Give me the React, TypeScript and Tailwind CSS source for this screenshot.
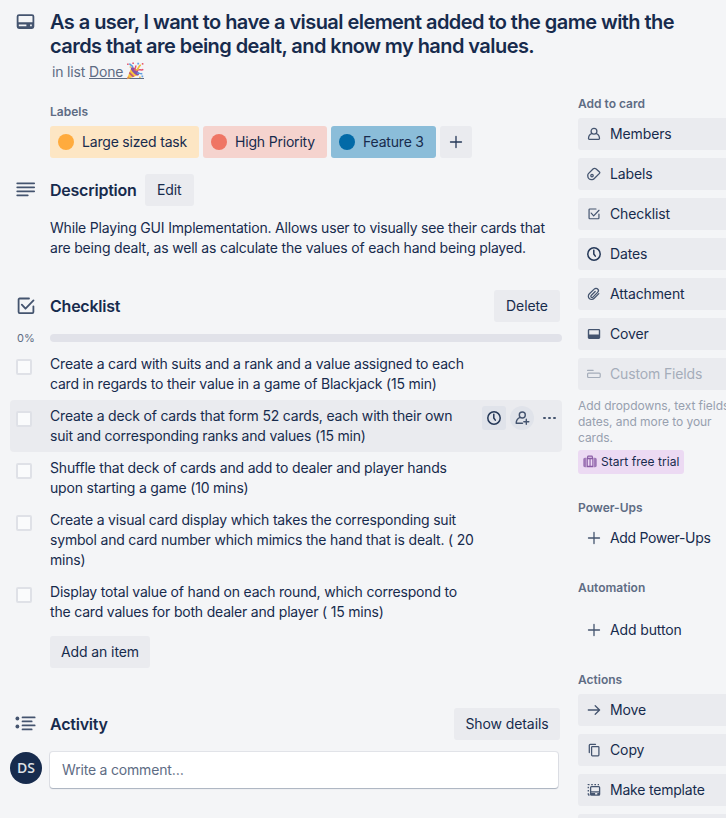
import type { ReactNode } from "react";

type IconProps = { className?: string };

const stroke = {
  fill: "none",
  stroke: "currentColor",
  strokeLinecap: "round" as const,
  strokeLinejoin: "round" as const,
};

function CardIcon() {
  return (
    <svg width="20" height="16" viewBox="0 0 20 16" className="block">
      <path
        fill="currentColor"
        fillRule="evenodd"
        d="M3 .3h13a2.300 2.300 0 0 1 2.300 2.300v10A2.300 2.300 0 0 1 16 14.900H3A2.300 2.300 0 0 1 .7 12.600v-10A2.300 2.300 0 0 1 3 .3ZM3 2a.5.5 0 0 0-.5.5v5.800h14V2.500A.5.5 0 0 0 16 2H3Zm-.2 8.600v1.700h7.600v-1.700H2.800Zm11.300 0v1.700h1.700v-1.700h-1.700Z"
      />
    </svg>
  );
}

function LinesIcon() {
  return (
    <svg width="20" height="16" viewBox="0 0 20 16" className="block" {...stroke} strokeWidth="1.700">
      <path d="M1.200 1.300h17M1.200 5.300h17M1.200 9.300h17M1.200 13.300h10.600" />
    </svg>
  );
}

function CheckIcon({ className }: IconProps) {
  return (
    <svg viewBox="0 0 18 18" className={className} {...stroke} strokeWidth="1.800">
      <path d="M12 1.500H2.600a1 1 0 0 0-1 1v12.600a1 1 0 0 0 1 1h12.800a1 1 0 0 0 1-1V9.300" />
      <path d="M4.800 7.600l3.700 4.100 8-8.300" />
    </svg>
  );
}

function ActivityIcon() {
  return (
    <svg width="22" height="16" viewBox="0 0 22 16" className="block" {...stroke} strokeWidth="1.700">
      <path d="M7.500 1.400h12.200M7.500 5.400h9.200M7.500 9.400h12.200M7.500 13.400h9.200" />
      <circle cx="2.400" cy="2.500" r="1.900" fill="currentColor" stroke="none" />
      <circle cx="2.400" cy="10.500" r="1.900" fill="currentColor" stroke="none" />
    </svg>
  );
}

function ClockIcon({ className }: IconProps) {
  return (
    <svg viewBox="0 0 16 16" className={className} {...stroke} strokeWidth="1.500">
      <circle cx="8" cy="8" r="6.200" />
      <path d="M7.800 4.300V8l1.500 2.200" />
    </svg>
  );
}

function MemberIcon() {
  return (
    <svg width="16" height="16" viewBox="0 0 16 16" {...stroke} strokeWidth="1.300">
      <circle cx="8" cy="5.200" r="2.900" />
      <path d="M5.900 7.500C3.600 8.300 2.500 10.300 2.500 12.600c0 .500.300.800.800.800h9.400c.500 0 .800-.300.800-.800 0-2.300-1.100-4.300-3.400-5.100" />
    </svg>
  );
}

function AddMemberIcon() {
  return (
    <svg width="16" height="16" viewBox="0 0 16 16" {...stroke} strokeWidth="1.400">
      <circle cx="8.300" cy="5" r="3" />
      <path d="M6.200 7.400C3.500 8.400 2.200 10.500 2.200 13.200H8.500M12.300 9.200v5M9.800 11.700h5" />
    </svg>
  );
}

function LabelIcon() {
  return (
    <svg width="16" height="16" viewBox="0 0 16 16" {...stroke} strokeWidth="1.300">
      <path d="M7.300 2.800 2.400 7.600c-.400.400-.600.900-.600 1.500v.800c0 2 1.600 3.700 3.700 3.700h.800c.600 0 1.100-.200 1.500-.600l5.700-5.600c.400-.400.400-1 0-1.400L9.900 2.800C9.200 2.100 8 2.100 7.300 2.800Z" />
      <circle cx="6" cy="9.600" r="1.200" />
    </svg>
  );
}

function AttachmentIcon() {
  return (
    <svg width="16" height="16" viewBox="0 0 16 16" {...stroke} strokeWidth="1.250">
      <path d="m12.800 7.600-4.600 4.700c-1.400 1.400-3.600 1.500-4.900.200s-1.300-3.300.1-4.700l4.800-4.700c1-1 2.600-1.100 3.500-.100.900.900.900 2.400-.100 3.400l-4.700 4.700c-.500.500-1.300.600-1.700.100-.500-.500-.500-1.200 0-1.700l4-4" />
    </svg>
  );
}

function CoverIcon() {
  return (
    <svg width="16" height="16" viewBox="0 0 16 16">
      <path
        fill="currentColor"
        fillRule="evenodd"
        d="M3.200 3h9.600c.8 0 1.400.6 1.400 1.400v7.200c0 .8-.6 1.400-1.400 1.400H3.200c-.8 0-1.400-.6-1.400-1.400V4.400C1.800 3.600 2.400 3 3.200 3Zm0 1.200v4.300h9.600V4.200H3.200Z"
      />
    </svg>
  );
}

function FieldsIcon() {
  return (
    <svg width="16" height="16" viewBox="0 0 16 16" {...stroke} strokeWidth="1.200">
      <path d="M1.600 4.400h5.500" />
      <rect x="1.600" y="7.100" width="12.600" height="4.400" rx="1" />
    </svg>
  );
}

function BriefcaseIcon() {
  return (
    <svg width="14" height="14" viewBox="0 0 14 14" className="block text-[#8a5ba5]">
      <path
        fill="none"
        stroke="currentColor"
        strokeWidth="1.100"
        d="M4.600 3V1.900c0-.500.300-.800.800-.800h3.200c.500 0 .8.300.8.800V3"
      />
      <path fill="currentColor" d="M2 2.800h.900v9.400H2C1 12.200.3 11.500.3 10.500v-6c0-1 .7-1.700 1.700-1.700ZM11.100 2.800h.9c1 0 1.700.7 1.700 1.700v6c0 1-.7 1.700-1.700 1.700h-.9Z" opacity=".8" />
      <path fill="currentColor" fillRule="evenodd" d="M3.500 2.800h7v9.400h-7Zm1.300 1.500v6.400h1.700V4.300Zm2.800 0v6.400h1.700V4.300Z" />
    </svg>
  );
}

function PlusIcon({ className }: IconProps) {
  return (
    <svg width="16" height="16" viewBox="0 0 16 16" className={className} {...stroke} strokeWidth="1.300">
      <path d="M8 2.500v11M2.500 8h11" />
    </svg>
  );
}

function ArrowIcon() {
  return (
    <svg width="16" height="16" viewBox="0 0 16 16" {...stroke} strokeWidth="1.300">
      <path d="M2.300 8h11.300M9.200 3.700 13.600 8l-4.400 4.300" />
    </svg>
  );
}

function CopyIcon() {
  return (
    <svg width="16" height="16" viewBox="0 0 16 16" {...stroke} strokeWidth="1.250">
      <path d="M3.300 10.500V3.200c0-.500.400-.900.900-.900h5.300" />
      <rect x="5.600" y="4.500" width="7.300" height="9.300" rx=".8" />
    </svg>
  );
}

function TemplateIcon() {
  return (
    <svg width="16" height="16" viewBox="0 0 16 16" fill="none" stroke="currentColor" strokeWidth="1.300">
      <path d="M2.300 12.800v-1.500M2.300 9.500V8M2.300 6.200V4.700M2.300 3V2.600h1.200M5.200 2.600h1.600M8.400 2.600h1.600M11.700 2.600H13M2.200 13h1.300" />
      <rect x="4.600" y="4.700" width="9" height="8.500" rx=".9" />
      <path d="M4.600 9.900h9" />
      <path d="M4.600 12h4.500M11.300 12h2.300" strokeWidth="1.800" />
    </svg>
  );
}

function PartyPopper() {
  return (
    <svg width="18" height="18" viewBox="0 0 18 18" className="block shrink-0">
      <path d="M.8 17.200 5.300 5.600l7.300 7.300Z" fill="#f8c63d" />
      <path d="M3.700 9.700 8.500 14.400l-1.800.8-3.900-3.600ZM5.300 5.600l7.300 7.300-1.800.700-6-6.500Z" fill="#c55b77" />
      <path d="M2 14.300l1.800 1.700-3 1.200Z" fill="#dc8055" />
      <ellipse cx="9" cy="9.200" rx="2.200" ry="5.200" transform="rotate(-45 9 9.200)" fill="#8952a5" />
      <path d="M8.500 8.500c.2-2.700 1.700-2.500 1.200-5M10.500 9c2.500-3 4.500.2 6.800-1.700" fill="none" stroke="#e55571" strokeWidth="1.500" />
      <path d="M9.600 8.200c3.600-.4 2.200-4 5.200-5.200" fill="none" stroke="#edbd39" strokeWidth="1.700" />
      <path d="M11 11.300c2.300-.8 3 .9 5.300.2M6.800 5.400C6.700 3 4.300 3.600 3.500 1.500" fill="none" stroke="#5b9be0" strokeWidth="1.500" />
      <path d="M1 1.400h1.700v1.700H1ZM6.300.5H8V2H6.300Z" fill="#e86478" />
      <path d="M11.300.8h1.800v1.700h-1.800ZM15.500 13.500h1.700v1.700h-1.700Z" fill="#65a3e6" />
      <path d="M15.800 1h1.600v1.700h-1.600Z" fill="#e7606f" />
      <path d="M13.100 14.500h1.600v1.600h-1.600ZM3.700 4.300h1.500v1.500H3.700Z" fill="#efc14a" />
    </svg>
  );
}

function Button({ children, className = "" }: { children: ReactNode; className?: string }) {
  return (
    <button
      className={`flex h-8 items-center justify-center whitespace-nowrap rounded-[3px] bg-[#eaebef] tracking-[-0.1px] ${className}`}
    >
      {children}
    </button>
  );
}

function Label({ name, className, dot }: { name: string; className: string; dot: string }) {
  return (
    <div className={`flex h-8 items-center gap-2 whitespace-nowrap rounded-[3px] pl-2 ${className}`}>
      <span className={`size-4 shrink-0 rounded-full ${dot}`} />
      {name}
    </div>
  );
}

function Section({ icon, title, children }: { icon: ReactNode; title: string; children?: ReactNode }) {
  return (
    <div className="flex h-8 items-center">
      <div className="w-10 shrink-0 text-[#44546f]">{icon}</div>
      <h3 className="text-base font-semibold tracking-[-0.23px]">{title}</h3>
      {children}
    </div>
  );
}

function ChecklistItem({ lines, active = false }: { lines: ReactNode[]; active?: boolean }) {
  return (
    <div className={`flex py-1.5 ${active ? "rounded-[4px] bg-[#eaebef]" : ""}`}>
      <span className="ml-1.5 mt-[5px] size-4 shrink-0 rounded-[2px] border-2 border-[#dfe1e7] bg-[#fafbfc]" />
      <div className="ml-[18px] flex-1 whitespace-nowrap">
        {lines.map((line, i) => (
          <div key={i}>{line}</div>
        ))}
      </div>
      {active && (
        <div className="flex h-6 gap-1 text-[#253858]">
          <span className="flex size-6 items-center justify-center rounded-[3px] bg-[#e0e3ea]">
            <ClockIcon className="size-4" />
          </span>
          <span className="flex size-6 items-center justify-center rounded-full bg-[#e0e3ea] text-[#44546f]">
            <AddMemberIcon />
          </span>
          <span className="flex w-6 items-center gap-[2.500px] pl-[5px]">
            <i className="size-[2.500px] rounded-full bg-[#44546f]" />
            <i className="size-[2.500px] rounded-full bg-[#44546f]" />
            <i className="size-[2.500px] rounded-full bg-[#44546f]" />
          </span>
        </div>
      )}
    </div>
  );
}

function SideHeading({ children }: { children: ReactNode }) {
  return <h4 className="h-5 text-xs font-semibold leading-5 tracking-normal text-[#5e6c84]">{children}</h4>;
}

function SideButton({
  icon,
  children,
  className = "bg-[#eaebef] tracking-[-0.12px]",
  tone = "text-[#44546f]",
}: {
  icon: ReactNode;
  children: ReactNode;
  className?: string;
  tone?: string;
}) {
  return (
    <button className={`flex h-8 w-full shrink-0 items-center gap-2 whitespace-nowrap rounded-[3px] pl-2 ${className}`}>
      <span className={`flex size-4 items-center justify-center ${tone}`}>{icon}</span>
      {children}
    </button>
  );
}

export default function App() {
  return (
    <div className="flex h-[818px] w-[726px] overflow-hidden bg-[#f4f5f7] font-['Inter','Liberation_Sans',sans-serif] text-sm leading-5 tracking-[-0.19px] text-[#172b4d]">
      <main className="ml-2.5 w-[552px] shrink-0 pt-2.5">
        <div className="flex">
          <div className="w-10 shrink-0 pl-1.5 pt-1 text-[#44546f]">
            <CardIcon />
          </div>
          <div className="whitespace-nowrap">
            <h2 className="text-xl font-semibold leading-6 tracking-[-0.56px]">
              <div>As a user, I want to have a visual element added to the game with the</div>
              <div>cards that are being dealt, and know my hand values.</div>
            </h2>
            <p className="ml-0.5 mt-1 flex h-5 gap-1 text-[#5e6c84]">
              <span>in list</span>
              <a className="flex h-[17px] gap-[3px] border-b border-[#5e6c84]">
                Done <PartyPopper />
              </a>
            </p>
          </div>
        </div>

        <div className="ml-10 mt-5">
          <SideHeading>Labels</SideHeading>
          <div className="mt-1 flex gap-1">
            <Label name="Large sized task" className="w-[149px] bg-[#fde6c4]" dot="bg-[#ffab3d]" />
            <Label name="High Priority" className="w-[124px] bg-[#f5d3ce]" dot="bg-[#ef7564]" />
            <Label name="Feature 3" className="w-[105px] bg-[#8bbdd9]" dot="bg-[#026aa7]" />
            <Button className="w-8">
              <PlusIcon className="text-[#253858]" />
            </Button>
          </div>
        </div>

        <section className="mt-4">
          <Section icon={<div className="pl-1.5"><LinesIcon /></div>} title="Description">
            <Button className="ml-2 w-[49px]">Edit</Button>
          </Section>
          <div className="ml-10 mt-3 whitespace-nowrap">
            <div>While Playing GUI Implementation. Allows user to visually see their cards that</div>
            <div>are being dealt, as well as calculate the values of each hand being played.</div>
          </div>
        </section>

        <section className="mt-8">
          <Section icon={<div className="pl-[7px]"><CheckIcon className="block size-[18px]" /></div>} title="Checklist">
            <Button className="ml-auto mr-0.5 w-[66px]">Delete</Button>
          </Section>
          <div className="mt-3 flex h-2 items-center">
            <span className="w-10 pl-[7px] text-[11px] tracking-normal text-[#5e6c84]">0%</span>
            <span className="h-2 flex-1 rounded-full bg-[#e1e2e9]" />
          </div>
          <div className="mt-1.5">
            <ChecklistItem
              lines={[
                "Create a card with suits and a rank and a value assigned to each",
                "card in regards to their value in a game of Blackjack (15 min)",
              ]}
            />
            <ChecklistItem
              active
              lines={[
                "Create a deck of cards that form 52 cards, each with their own",
                "suit and corresponding ranks and values (15 min)",
              ]}
            />
            <ChecklistItem
              lines={["Shuffle that deck of cards and add to dealer and player hands", "upon starting a game (10 mins)"]}
            />
            <ChecklistItem
              lines={[
                "Create a visual card display which takes the corresponding suit",
                "symbol and card number which mimics the hand that is dealt. ( 20",
                "mins)",
              ]}
            />
            <ChecklistItem
              lines={[
                "Display total value of hand on each round, which correspond to",
                "the card values for both dealer and player ( 15 mins)",
              ]}
            />
          </div>
          <Button className="ml-10 mt-2 w-[100px]">Add an item</Button>
        </section>

        <section className="mt-10">
          <Section icon={<div className="pl-[5px]"><ActivityIcon /></div>} title="Activity">
            <Button className="ml-auto mr-0.5 w-[106px]">Show details</Button>
          </Section>
          <div className="mt-3 flex">
            <span className="flex size-8 items-center justify-center rounded-full bg-[#172b4d] font-['Open_Sans','Noto_Sans',sans-serif] text-sm font-semibold tracking-normal text-[#dfe1e6]">
              DS
            </span>
            <div className="ml-2 flex h-9 w-[508px] items-center rounded-[3px] bg-white pl-3 text-[#5e6c84] shadow-[0_1px_1px_rgba(9,30,66,0.25),0_0_0_1px_rgba(9,30,66,0.08)]">
              Write a comment…
            </div>
          </div>
        </section>
      </main>

      <aside className="ml-4 flex w-[168px] shrink-0 flex-col pt-[84px]">
        <div className="pt-2.5">
          <SideHeading>Add to card</SideHeading>
        </div>
        <div className="mt-1 flex flex-col gap-2">
          <SideButton icon={<MemberIcon />}>Members</SideButton>
          <SideButton icon={<LabelIcon />}>Labels</SideButton>
          <SideButton icon={<CheckIcon className="size-3" />}>Checklist</SideButton>
          <SideButton icon={<ClockIcon className="size-4" />} tone="text-[#253858]">
            Dates
          </SideButton>
          <SideButton icon={<AttachmentIcon />}>Attachment</SideButton>
          <SideButton icon={<CoverIcon />}>Cover</SideButton>
          <SideButton icon={<FieldsIcon />} tone="text-[#a5adba]" className="bg-[#eaebef] text-[#a5adba] tracking-[-0.15px]">
            Custom Fields
          </SideButton>
        </div>
        <div className="mt-2 whitespace-nowrap text-xs leading-4 tracking-[-0.05px] text-[#97a0af]">
          <div>Add dropdowns, text fields,</div>
          <div>dates, and more to your</div>
          <div>cards.</div>
        </div>
        <button className="mt-1 flex h-6 w-[106px] shrink-0 items-center gap-1 whitespace-nowrap rounded-[3px] bg-[#ecdaf3] pl-[5px] text-xs tracking-[0.04px]">
          <BriefcaseIcon />
          Start free trial
        </button>

        <div className="mt-6">
          <SideHeading>Power-Ups</SideHeading>
          <SideButton icon={<PlusIcon />} className="mt-1 tracking-[-0.32px]">
            Add Power-Ups
          </SideButton>
        </div>
        <div className="mt-6">
          <SideHeading>Automation</SideHeading>
          <SideButton icon={<PlusIcon />} className="mt-4 tracking-[-0.12px]">
            Add button
          </SideButton>
        </div>
        <div className="mt-6">
          <SideHeading>Actions</SideHeading>
          <div className="mt-1 flex flex-col gap-2">
            <SideButton icon={<ArrowIcon />}>Move</SideButton>
            <SideButton icon={<CopyIcon />}>Copy</SideButton>
            <SideButton icon={<TemplateIcon />} className="bg-[#eaebef] tracking-[-0.2px]">
              Make template
            </SideButton>
            <div className="h-8 rounded-[3px] bg-[#eaebef]" />
          </div>
        </div>
      </aside>
    </div>
  );
}
